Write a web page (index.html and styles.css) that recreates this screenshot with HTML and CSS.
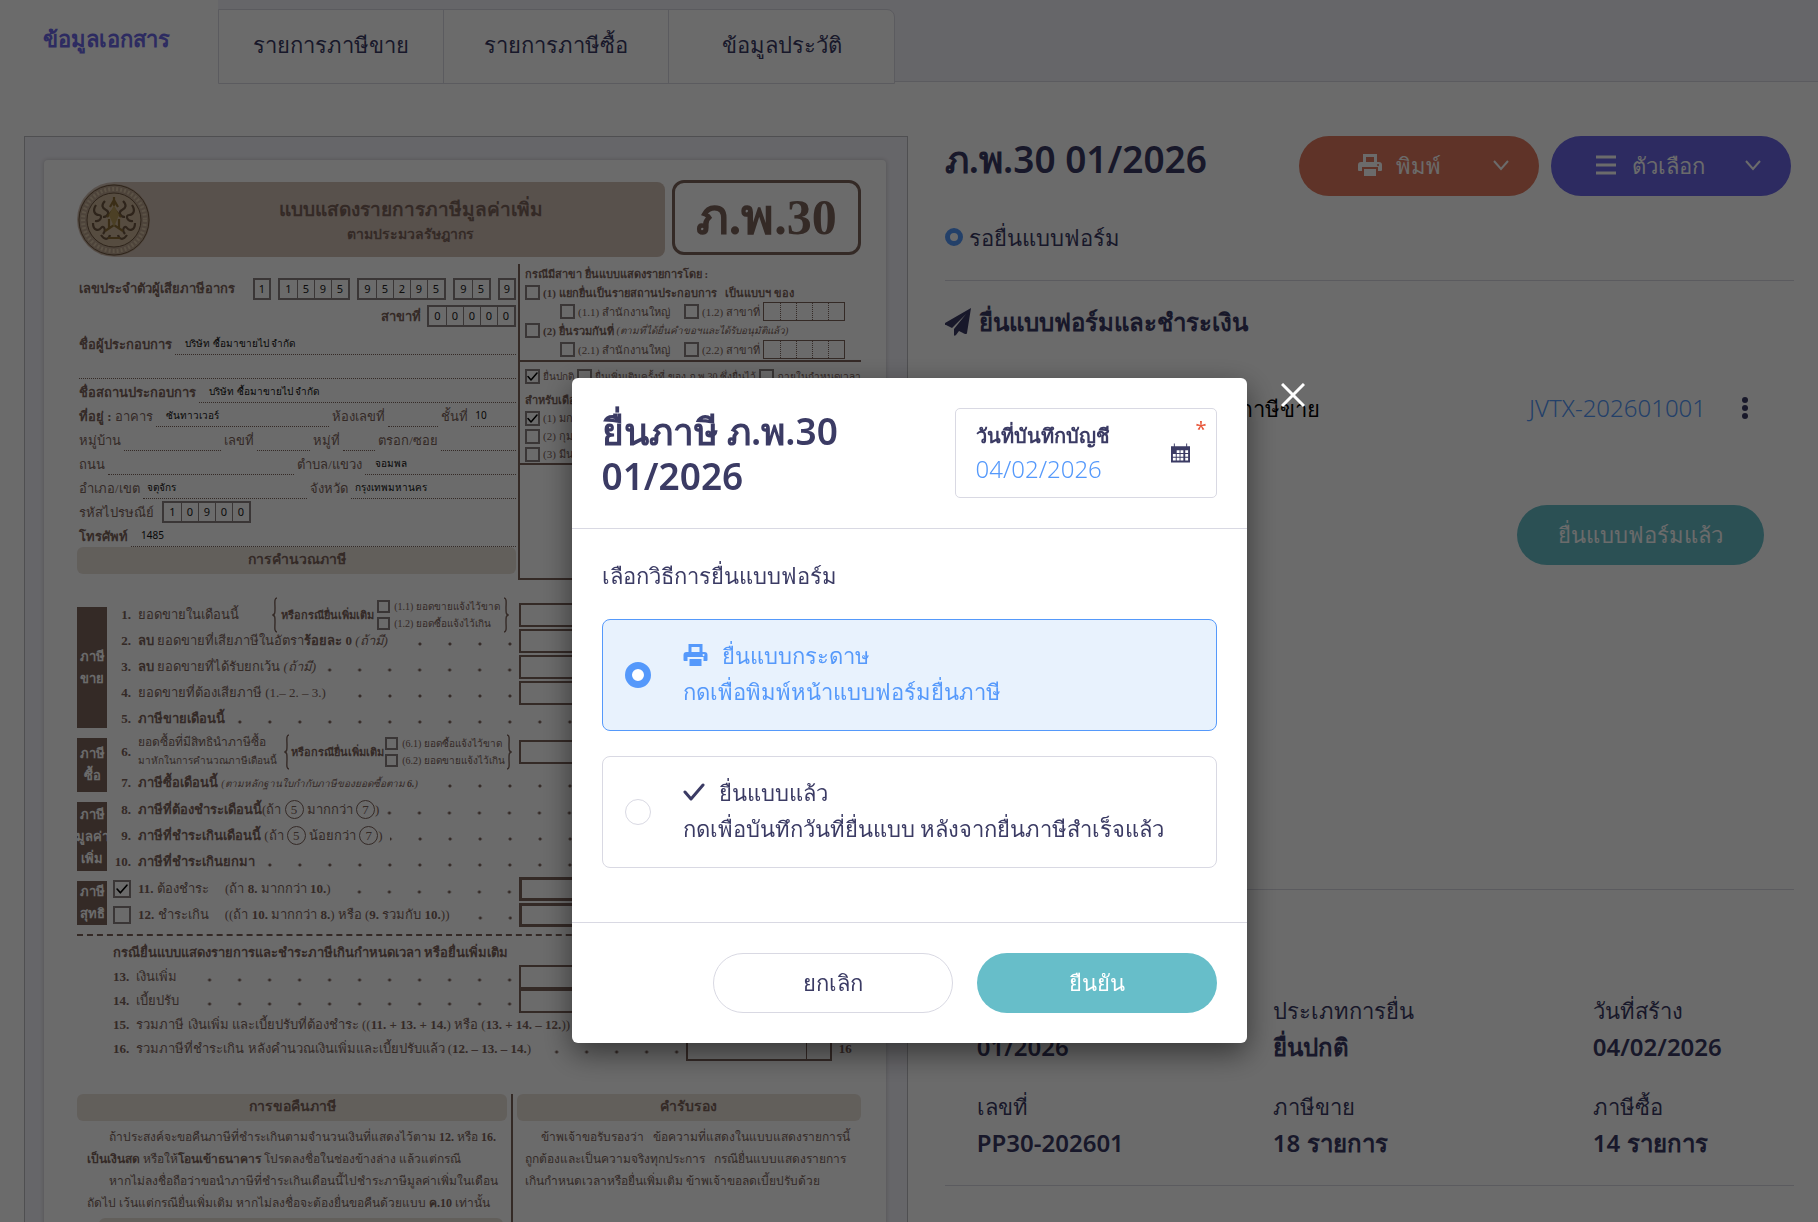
FILE: index.html
```html
<!DOCTYPE html>
<html lang="th">
<head>
    <meta charset="UTF-8">
    <meta name="viewport" content="width=device-width, initial-scale=1.0">
    <title>ภ.พ.30 01/2026</title>
    <link rel="stylesheet" href="styles.css">
</head>
<body>
    <svg class="sprite" aria-hidden="true">
        <symbol id="icon-print" viewBox="0 0 24 24">
            <path fill-rule="evenodd" d="M5 1h14v8h2a3 3 0 0 1 3 3v5a1 1 0 0 1-1 1h-3v-4H4v4H1a1 1 0 0 1-1-1v-5a3 3 0 0 1 3-3h2zM8 4v5h8V4zM20 11a1 1 0 1 0 .1 0z"/>
            <path d="M6 16h12v7H6z"/>
        </symbol>
        <symbol id="icon-down" viewBox="0 0 16 16">
            <path d="M1 4l7 8 7-8" fill="none" stroke="currentColor" stroke-width="2"/>
        </symbol>
        <symbol id="icon-check" viewBox="0 0 22 18">
            <path d="M2 9l6 7L20 2" fill="none" stroke="currentColor" stroke-width="3" stroke-linecap="round" stroke-linejoin="round"/>
        </symbol>
        <symbol id="icon-brace" viewBox="0 0 6 36">
            <path d="M5 1C2 1 3 6 3 11s0 6-2 7c2 1 2 2 2 7s-1 10 2 10" fill="none" stroke="currentColor" stroke-width="1.4"/>
        </symbol>
    </svg>

    <nav class="tabs">
        <a href="#doc" class="tab active">ข้อมูลเอกสาร</a>
        <div class="tab-group">
            <a href="#sales" class="tab">รายการภาษีขาย</a>
            <a href="#purchase" class="tab">รายการภาษีซื้อ</a>
            <a href="#history" class="tab">ข้อมูลประวัติ</a>
        </div>
    </nav>

    <main class="content">
        <section class="viewer">
            <div class="paper">
                <div class="form-head">
                    <div class="form-title">
                        <svg class="seal" viewBox="0 0 74 74">
                            <circle cx="37" cy="37" r="36" fill="#b9a28c"/>
                            <circle cx="37" cy="37" r="35" fill="none" stroke="#6e5640" stroke-width="1"/>
                            <circle cx="37" cy="37" r="31" fill="none" stroke="#d8c3a6" stroke-width="4" stroke-dasharray="2 2"/>
                            <circle cx="37" cy="37" r="27" fill="#cdb698" stroke="#6e5640" stroke-width="1"/>
                            <g fill="none" stroke="#6e5640" stroke-width="2.2">
                                <path d="M19 22c-4 6-1 10 3 10s2 7-4 6M16 40c0 8 6 8 8 5s6 1 2 6M28 18c-4 4-3 7 1 9s2 7-3 7M55 22c4 6 1 10-3 10s-2 7 4 6M58 40c0 8-6 8-8 5s-6 1-2 6M46 18c4 4 3 7-1 9s-2 7 3 7M24 52c4 6 8 4 9 0M50 52c-4 6-8 4-9 0"/>
                                <path d="M37 14v9M33 24l4-7 4 7M30 34l7-8 7 8M32 36v10M42 36v10M28 48l9-6 9 6M31 55h12" stroke="#8a6d35"/>
                            </g>
                            <path d="M37 22l5 10-5 12-5-12z" fill="#b59a58"/>
                        </svg>
                        <div class="form-title-text">
                            <strong>แบบแสดงรายการภาษีมูลค่าเพิ่ม</strong>
                            <b>ตามประมวลรัษฎากร</b>
                        </div>
                    </div>
                    <div class="form-code">ภ.พ.30</div>
                </div>

                <div class="form-top">
                    <div class="payer">
                        <div class="line tax-id">
                            <b>เลขประจำตัวผู้เสียภาษีอากร</b>
                            <span class="digits first"><i>1</i></span>
                            <span class="digits"><i>1</i><i>5</i><i>9</i><i>5</i></span>
                            <span class="digits"><i>9</i><i>5</i><i>2</i><i>9</i><i>5</i></span>
                            <span class="digits"><i>9</i><i>5</i></span>
                            <span class="digits"><i>9</i></span>
                        </div>
                        <div class="line branch"><b>สาขาที่</b><span class="digits"><i>0</i><i>0</i><i>0</i><i>0</i><i>0</i></span></div>
                        <div class="line"><b>ชื่อผู้ประกอบการ</b><span class="fill">บริษัท ซื้อมาขายไป จำกัด</span></div>
                        <div class="line"><span class="fill"></span></div>
                        <div class="line"><b>ชื่อสถานประกอบการ</b><span class="fill">บริษัท ซื้อมาขายไป จำกัด</span></div>
                        <div class="line"><span><b>ที่อยู่ :</b> อาคาร</span><span class="fill w4">ซันทาวเวอร์</span><span>ห้องเลขที่</span><span class="fill w1"></span><span>ชั้นที่</span><span class="fill w1 tight">10</span></div>
                        <div class="line"><span>หมู่บ้าน</span><span class="fill w4"></span><span>เลขที่</span><span class="fill w2"></span><span>หมู่ที่</span><span class="fill w1"></span><span>ตรอก/ซอย</span><span class="fill w3"></span></div>
                        <div class="line"><span>ถนน</span><span class="fill w5"></span><span>ตำบล/แขวง</span><span class="fill w4">จอมพล</span></div>
                        <div class="line"><span>อำเภอ/เขต</span><span class="fill w4 tight">จตุจักร</span><span>จังหวัด</span><span class="fill w4 tight">กรุงเทพมหานคร</span></div>
                        <div class="line zip"><span>รหัสไปรษณีย์</span><span class="digits"><i>1</i><i>0</i><i>9</i><i>0</i><i>0</i></span></div>
                        <div class="line"><b>โทรศัพท์</b><span class="fill">1485</span></div>
                        <div class="bar">การคำนวณภาษี</div>
                    </div>
                    <div class="filing">
                        <div class="line"><b>กรณีมีสาขา ยื่นแบบแสดงรายการโดย :</b></div>
                        <div class="line"><i class="box"></i><b>(1) แยกยื่นเป็นรายสถานประกอบการ &nbsp; เป็นแบบฯ ของ</b></div>
                        <div class="line sub"><i class="box"></i><span class="office">(1.1) สำนักงานใหญ่</span><i class="box"></i><span>(1.2) สาขาที่</span><span class="cells"><i></i><i></i><i></i><i></i><i></i></span></div>
                        <div class="line"><i class="box"></i><b>(2) ยื่นรวมกันที่</b><em>(ตามที่ได้ยื่นคำขอฯและได้รับอนุมัติแล้ว)</em></div>
                        <div class="line sub"><i class="box"></i><span class="office">(2.1) สำนักงานใหญ่</span><i class="box"></i><span>(2.2) สาขาที่</span><span class="cells"><i></i><i></i><i></i><i></i><i></i></span></div>
                        <div class="line ruled"><i class="box checked"><svg><use href="#icon-check"/></svg></i><span>ยื่นปกติ</span><i class="box"></i><span class="grow">ยื่นเพิ่มเติมครั้งที่</span><span>ของ ภ.พ.30 ซึ่งยื่นไว้</span><i class="box"></i><span>ภายในกำหนดเวลา</span></div>
                        <div class="line month"><b>สำหรับเดือน</b></div>
                        <div class="line month"><i class="box checked"><svg><use href="#icon-check"/></svg></i><span>(1) มกราคม</span></div>
                        <div class="line month"><i class="box"></i><span>(2) กุมภาพันธ์</span></div>
                        <div class="line month"><i class="box"></i><span>(3) มีนาคม</span></div>
                        <div class="stamp"></div>
                    </div>
                </div>

                <div class="calc">
                    <div class="group">
                        <div class="side">ภาษี<br>ขาย</div>
                        <ol class="items">
                            <li><span class="no">1.</span><span>ยอดขายในเดือนนี้</span>
                                <span class="extra">
                                    <svg class="brace"><use href="#icon-brace"/></svg><b>หรือกรณียื่นเพิ่มเติม</b>
                                    <span class="pair"><span><i class="box"></i>(1.1) ยอดขายแจ้งไว้ขาด</span><span><i class="box"></i>(1.2) ยอดซื้อแจ้งไว้เกิน</span></span>
                                    <svg class="brace flip"><use href="#icon-brace"/></svg>
                                </span>
                                <span class="amount"></span></li>
                            <li><span class="no">2.</span><span><b>ลบ</b> ยอดขายที่เสียภาษีในอัตรา<b>ร้อยละ 0</b> <em>(ถ้ามี)</em></span><span class="leader"></span><span class="amount"></span></li>
                            <li><span class="no">3.</span><span><b>ลบ</b> ยอดขายที่ได้รับยกเว้น <em>(ถ้ามี)</em></span><span class="leader"></span><span class="amount"></span></li>
                            <li><span class="no">4.</span><span>ยอดขายที่ต้องเสียภาษี (1.– 2. – 3.)</span><span class="leader"></span><span class="amount"></span></li>
                            <li><span class="no">5.</span><b>ภาษีขายเดือนนี้</b><span class="leader"></span><span class="blank"></span></li>
                        </ol>
                    </div>
                    <div class="group">
                        <div class="side">ภาษี<br>ซื้อ</div>
                        <ol class="items">
                            <li class="tall"><span class="no">6.</span><span>ยอดซื้อที่มีสิทธินำภาษีซื้อ<br><small>มาหักในการคำนวณภาษีเดือนนี้</small></span>
                                <span class="extra">
                                    <svg class="brace"><use href="#icon-brace"/></svg><b>หรือกรณียื่นเพิ่มเติม</b>
                                    <span class="pair"><span><i class="box"></i>(6.1) ยอดซื้อแจ้งไว้ขาด</span><span><i class="box"></i>(6.2) ยอดขายแจ้งไว้เกิน</span></span>
                                    <svg class="brace flip"><use href="#icon-brace"/></svg>
                                </span>
                                <span class="amount"></span></li>
                            <li><span class="no">7.</span><span><b>ภาษีซื้อเดือนนี้</b> <em class="fine">(ตามหลักฐานใบกำกับภาษีของยอดซื้อตาม <b>6.</b>)</em></span><span class="leader"></span><span class="blank"></span></li>
                        </ol>
                    </div>
                    <div class="group">
                        <div class="side">ภาษี<br>มูลค่า<br>เพิ่ม</div>
                        <ol class="items">
                            <li><span class="no">8.</span><span><b>ภาษีที่ต้องชำระเดือนนี้</b>(ถ้า <i class="ring">5</i> มากกว่า <i class="ring">7</i>)</span><span class="leader"></span><span class="blank"></span></li>
                            <li><span class="no">9.</span><span><b>ภาษีที่ชำระเกินเดือนนี้</b> (ถ้า <i class="ring">5</i> น้อยกว่า <i class="ring">7</i>)</span><span class="leader"></span><span class="blank"></span></li>
                            <li><span class="no">10.</span><b>ภาษีที่ชำระเกินยกมา</b><span class="leader"></span><span class="blank"></span></li>
                        </ol>
                    </div>
                    <div class="group">
                        <div class="side">ภาษี<br>สุทธิ</div>
                        <ol class="items">
                            <li><span class="no"><i class="box big checked"><svg><use href="#icon-check"/></svg></i></span><span><b>11.</b> ต้องชำระ &nbsp; &nbsp; (ถ้า <b>8.</b> มากกว่า <b>10.</b>)</span><span class="leader"></span><span class="amount heavy"></span></li>
                            <li><span class="no"><i class="box big"></i></span><span><b>12.</b> ชำระเกิน &nbsp; &nbsp; ((ถ้า <b>10.</b> มากกว่า <b>8.</b>) หรือ (<b>9.</b> รวมกับ <b>10.</b>))</span><span class="leader"></span><span class="amount heavy"></span></li>
                        </ol>
                    </div>
                    <div class="late">
                        <div class="late-row"><b>กรณียื่นแบบแสดงรายการและชำระภาษีเกินกำหนดเวลา หรือยื่นเพิ่มเติม</b></div>
                        <div class="late-row"><b>13.</b><span>เงินเพิ่ม</span><span class="leader"></span><span class="amount"></span></div>
                        <div class="late-row"><b>14.</b><span>เบี้ยปรับ</span><span class="leader"></span><span class="amount"></span></div>
                        <div class="late-row"><b>15.</b><span>รวมภาษี เงินเพิ่ม และเบี้ยปรับที่ต้องชำระ ((<b>11. + 13. + 14.</b>) หรือ (<b>13. + 14. – 12.</b>))</span></div>
                        <div class="late-row"><b>16.</b><span>รวมภาษีที่ชำระเกิน หลังคำนวณเงินเพิ่มและเบี้ยปรับแล้ว (<b>12. – 13. – 14.</b>)</span><span class="leader"></span><span class="total"></span><b class="total-no">16</b></div>
                    </div>
                </div>

                <div class="form-foot">
                    <div class="refund">
                        <div class="bar">การขอคืนภาษี</div>
                        <p>ถ้าประสงค์จะขอคืนภาษีที่ชำระเกินตามจำนวนเงินที่แสดงไว้ตาม <b>12.</b> หรือ <b>16.</b><br><b>เป็นเงินสด</b> หรือให้<b>โอนเข้าธนาคาร</b> โปรดลงชื่อในช่องข้างล่าง แล้วแต่กรณี</p>
                        <p>หากไม่ลงชื่อถือว่าขอนำภาษีที่ชำระเกินเดือนนี้ไปชำระภาษีมูลค่าเพิ่มในเดือน<br>ถัดไป เว้นแต่กรณียื่นเพิ่มเติม หากไม่ลงชื่อจะต้องยื่นขอคืนด้วยแบบ <b>ค.10</b> เท่านั้น</p>
                        <div class="bar next"></div>
                    </div>
                    <div class="certify">
                        <div class="bar">คำรับรอง</div>
                        <p>ข้าพเจ้าขอรับรองว่า &nbsp; ข้อความที่แสดงในแบบแสดงรายการนี้<br>ถูกต้องและเป็นความจริงทุกประการ &nbsp; กรณียื่นแบบแสดงรายการ<br>เกินกำหนดเวลาหรือยื่นเพิ่มเติม ข้าพเจ้าขอลดเบี้ยปรับด้วย</p>
                    </div>
                </div>
            </div>
        </section>

        <section class="details">
            <div class="details-head">
                <h1>ภ.พ.30 01/2026</h1>
                <div class="actions">
                    <button type="button" class="btn btn-print"><svg class="lead"><use href="#icon-print"/></svg><span>พิมพ์</span><svg class="caret"><use href="#icon-down"/></svg></button>
                    <button type="button" class="btn btn-menu"><svg class="lead" viewBox="0 0 24 24"><path d="M2 4h20M2 12h20M2 20h20" stroke="currentColor" stroke-width="3"/></svg><span>ตัวเลือก</span><svg class="caret"><use href="#icon-down"/></svg></button>
                </div>
            </div>
            <div class="status"><span class="status-ring"></span>รอยื่นแบบฟอร์ม</div>

            <div class="filing-step">
                <h2>
                    <svg viewBox="0 0 26 28"><path d="M26 0L0 15c-1 1 0 2 1 2l6 3L21 6 9 21v6c0 1 1 1 2 0l3-4 6 3c1 0 2 0 2-1z"/></svg>
                    ยื่นแบบฟอร์มและชำระเงิน
                </h2>
                <div class="journal">
                    <span class="journal-name">ปิดบัญชีภาษีขาย</span>
                    <a href="#JVTX-202601001">JVTX-202601001</a>
                    <button type="button" class="more" aria-label="เพิ่มเติม"><svg viewBox="0 0 6 22"><circle cx="3" cy="3" r="3"/><circle cx="3" cy="11" r="3"/><circle cx="3" cy="19" r="3"/></svg></button>
                </div>
                <button type="button" class="btn btn-filed">ยื่นแบบฟอร์มแล้ว</button>
            </div>

            <dl class="info">
                <div><dt>งวดภาษี</dt><dd>01/2026</dd></div>
                <div><dt>ประเภทการยื่น</dt><dd>ยื่นปกติ</dd></div>
                <div><dt>วันที่สร้าง</dt><dd>04/02/2026</dd></div>
                <div><dt>เลขที่</dt><dd>PP30-202601</dd></div>
                <div><dt>ภาษีขาย</dt><dd>18 รายการ</dd></div>
                <div><dt>ภาษีซื้อ</dt><dd>14 รายการ</dd></div>
            </dl>
        </section>
    </main>

    <div class="overlay">
        <form class="modal" role="dialog" aria-labelledby="modalTitle">
            <button type="button" class="close" aria-label="ปิด"><svg viewBox="0 0 24 24"><path d="M1 1l22 22M23 1L1 23" stroke="currentColor" stroke-width="3"/></svg></button>
            <div class="modal-head">
                <h2 id="modalTitle">ยื่นภาษี ภ.พ.30<br>01/2026</h2>
                <div class="date-field">
                    <div class="date-text">
                        <label for="postDate">วันที่บันทึกบัญชี</label>
                        <input type="text" id="postDate" value="04/02/2026">
                    </div>
                    <svg class="calendar" viewBox="0 0 20 20"><path fill-rule="evenodd" d="M0 3h3V0h1v3h12V0h1v3h3v17H0zM6 7v3h3V7zM10 7v3h3V7zM15 7v3h3V7zM2 11v3h3v-3zM6 11v3h3v-3zM10 11v3h3v-3zM15 11v3h3v-3zM2 15v3h3v-3zM6 15v3h3v-3zM10 15v3h3v-3zM15 15v3h3v-3z"/></svg>
                    <span class="required">*</span>
                </div>
            </div>
            <div class="modal-body">
                <p>เลือกวิธีการยื่นแบบฟอร์ม</p>
                <label class="option">
                    <input type="radio" name="method" checked>
                    <span class="option-text">
                        <span class="option-title"><svg><use href="#icon-print"/></svg>ยื่นแบบกระดาษ</span>
                        <span>กดเพื่อพิมพ์หน้าแบบฟอร์มยื่นภาษี</span>
                    </span>
                </label>
                <label class="option">
                    <input type="radio" name="method">
                    <span class="option-text">
                        <span class="option-title"><svg class="tick"><use href="#icon-check"/></svg>ยื่นแบบแล้ว</span>
                        <span>กดเพื่อบันทึกวันที่ยื่นแบบ หลังจากยื่นภาษีสำเร็จแล้ว</span>
                    </span>
                </label>
            </div>
            <div class="modal-foot">
                <button type="button" class="btn btn-cancel">ยกเลิก</button>
                <button type="submit" class="btn btn-confirm">ยืนยัน</button>
            </div>
        </form>
    </div>
</body>
</html>
```
FILE: styles.css
```css
:root {
    --text: #3b3b64;
    --line: #d9d9e3;
    --blue: #5599fb;
    --purple: #6b67e6;
    --teal: #67bec9;
    --orange: #e27a60;
    --ink: #7d645c;
    --bar: #e9e2da;
    --panel: #f3f2f9;
}
* {
    box-sizing: border-box;
}
body {
    margin: 0;
    height: 100vh;
    overflow: hidden;
    display: flex;
    flex-direction: column;
    background: #fff;
    color: var(--text);
    font-family: "Noto Sans", sans-serif;
    font-size: 22px;
    font-weight: 300;
    line-height: 36px;
}
a {
    color: var(--blue);
    text-decoration: none;
}
svg {
    fill: currentColor;
    flex: none;
}
.sprite {
    position: absolute;
    width: 0;
    height: 0;
}

/* tabs */
.tabs {
    display: flex;
    height: 82px;
    flex: none;
    background: var(--panel);
    border-bottom: 1px solid var(--line);
}
.tab {
    color: var(--text);
    display: flex;
    align-items: center;
    justify-content: center;
}
.tab.active {
    width: 218px;
    height: 84px;
    padding-right: 6px;
    padding-bottom: 8px;
    background: #fff;
    color: var(--purple);
    font-weight: 600;
}
.tab-group {
    display: flex;
    height: 75px;
    margin-top: 9px;
    border: 1px solid var(--line);
    border-radius: 0 8px 0 0;
    background: #fff;
}
.tab-group .tab {
    width: 225px;
    padding-bottom: 5px;
    border-right: 1px solid var(--line);
}
.tab-group .tab:last-child {
    border-right: none;
}

.content {
    flex: 1;
    min-height: 0;
    display: grid;
    grid-template-columns: 51fr 49fr;
    gap: 37px;
    padding: 54px 24px 0;
}
.viewer {
    overflow: hidden;
    padding: 23px 21px 0 19px;
    background: var(--panel);
    border: 1px solid #bdbdc2;
    border-bottom: none;
}

/* paper form */
.paper {
    padding: 20px 25px 0 33px;
    background: #fff;
    border-radius: 4px;
    box-shadow: 0 0 4px rgba(0, 0, 0, 0.2);
    color: var(--ink);
    font-family: "Liberation Serif", serif;
    font-size: 13px;
    font-weight: 400;
    line-height: 20px;
    white-space: nowrap;
}
.paper i {
    font-style: normal;
}
.form-head {
    display: flex;
    gap: 7px;
}
.form-title {
    flex: 1;
    display: flex;
    align-items: center;
    height: 75px;
    margin-top: 2px;
    background: #d2c0b5;
    border-radius: 38px 8px 8px 38px;
}
.seal {
    width: 74px;
    height: 74px;
}
.form-title-text {
    flex: 1;
    display: flex;
    flex-direction: column;
    align-items: center;
    padding: 4px 0 0 6px;
    line-height: 25px;
}
.form-title-text strong {
    font-size: 19px;
}
.form-title-text b {
    font-size: 14px;
}
.form-code {
    width: 189px;
    height: 75px;
    border: 3px solid var(--ink);
    border-radius: 12px;
    font-size: 50px;
    font-weight: bold;
    line-height: 68px;
    text-align: center;
}
.form-top {
    display: grid;
    grid-template-columns: 441px minmax(0, 1fr);
    margin-top: 7px;
}
.payer {
    display: flex;
    flex-direction: column;
    padding: 13px 2px 6px 0;
}
.line {
    display: flex;
    align-items: flex-end;
    gap: 3px;
    height: 24px;
    padding-left: 2px;
}
.tax-id {
    align-items: center;
    gap: 7px;
}
.first {
    margin-left: auto;
}
.branch {
    justify-content: flex-end;
    height: 26px;
    gap: 6px;
    margin-bottom: 4px;
}
.digits {
    display: flex;
    border: 2px solid #8a8280;
    color: #222;
    font-family: "Noto Sans", sans-serif;
    font-size: 11px;
    line-height: 18px;
}
.zip {
    gap: 8px;
}
.digits i {
    width: 17px;
    text-align: center;
}
.digits i:only-child {
    width: 14px;
}
.digits i + i {
    border-left: 1px solid #8a8280;
}
.fill {
    flex: 1;
    height: 19px;
    padding-left: 10px;
    border-bottom: 1px dotted var(--ink);
    color: #111;
    font-family: "Noto Sans", sans-serif;
    font-size: 10px;
    line-height: 14px;
}
.fill.tight {
    padding-left: 4px;
}
.w2 {
    flex-grow: 2;
}
.w3 {
    flex-grow: 3;
}
.w4 {
    flex-grow: 4;
}
.w5 {
    flex-grow: 5;
}
.bar {
    height: 27px;
    border-radius: 6px;
    background: var(--bar);
    font-size: 14px;
    font-weight: bold;
    line-height: 26px;
    text-align: center;
}
.filing {
    display: flex;
    flex-direction: column;
    border-left: 2px solid var(--ink);
    font-size: 11px;
}
.filing .line {
    height: 19px;
    padding-left: 5px;
    align-items: center;
}
.filing .line.sub {
    padding-left: 40px;
}
.filing .line.ruled {
    height: 31px;
    margin-top: 1px;
    border-top: 2px solid var(--ink);
    font-size: 10px;
}
.filing .line.month {
    height: 18px;
}
.filing .box {
    width: 15px;
    height: 15px;
}
.filing em {
    font-size: 10px;
}
.office {
    width: 104px;
}
.grow {
    flex: 1;
}
.cells {
    display: flex;
    margin-left: auto;
    margin-right: 16px;
    border: 1px solid var(--ink);
}
.cells i {
    width: 16px;
    height: 17px;
}
.cells i + i {
    border-left: 1px dotted var(--ink);
}
.stamp {
    flex: 1;
    border: 2px solid var(--ink);
    border-left: none;
}
.box {
    display: inline-block;
    flex: none;
    width: 13px;
    height: 13px;
    border: 2px solid #8a8280;
}
.box svg {
    display: block;
    width: 11px;
    height: 11px;
    color: #000;
}
.box.big {
    width: 18px;
    height: 18px;
}
.box.big svg {
    width: 12px;
    height: 12px;
    margin: 1px;
}
.calc {
    margin-top: 22px;
}
.group {
    display: flex;
    gap: 6px;
    margin-bottom: 1px;
}
.side {
    flex: none;
    display: flex;
    align-items: center;
    justify-content: center;
    width: 30px;
    margin: 5px 0 4px;
    background: var(--ink);
    color: #fff;
    font-weight: bold;
    line-height: 22px;
    text-align: center;
}
.items {
    flex: 1;
    min-width: 0;
    margin: 0;
    padding: 0;
    list-style: none;
}
.items li {
    display: flex;
    align-items: center;
    gap: 7px;
    height: 26px;
}
.items li.tall {
    height: 37px;
    font-size: 12px;
    line-height: 18px;
}
.no {
    flex: none;
    width: 18px;
    display: flex;
    justify-content: flex-end;
    font-size: 13px;
    font-weight: bold;
}
.extra {
    display: flex;
    align-items: center;
    gap: 3px;
    margin-left: auto;
    margin-right: 3px;
    font-size: 11px;
}
.tall .extra {
    gap: 1px;
    margin-right: 0;
}
.brace {
    width: 6px;
    height: 36px;
}
.flip {
    transform: scaleX(-1);
}
.pair {
    display: flex;
    flex-direction: column;
    font-size: 10px;
    line-height: 17px;
}
.pair span {
    display: flex;
    align-items: center;
    gap: 4px;
}
.leader {
    flex: 1;
    height: 14px;
    background: radial-gradient(circle at 28px 10px, var(--ink) 1px, transparent 2px) right top / 30px 14px repeat-x;
}
.amount {
    flex: none;
    width: 342px;
    height: 24px;
    border: 2px solid var(--ink);
}
.amount.heavy {
    border-width: 3px;
}
.blank {
    width: 282px;
}
.ring {
    display: inline-block;
    width: 19px;
    height: 19px;
    border: 1px solid var(--ink);
    border-radius: 50%;
    line-height: 17px;
    text-align: center;
}
small,
.fine {
    font-size: 10px;
}
.late {
    margin-top: 5px;
    padding: 5px 0 0 36px;
    border-top: 2px dashed var(--ink);
}
.late-row {
    display: flex;
    align-items: center;
    gap: 7px;
    height: 24px;
}
.total {
    width: 146px;
    height: 24px;
    border: 2px solid var(--ink);
    background: linear-gradient(var(--ink), var(--ink)) 118px 0 / 1px 100% no-repeat;
}
.total-no {
    width: 22px;
}
.form-foot {
    display: grid;
    grid-template-columns: 434px minmax(0, 1fr);
    margin-top: 33px;
    font-size: 12px;
    line-height: 22px;
}
.form-foot p {
    margin: 0;
    padding-left: 10px;
    text-indent: 22px;
}
.form-foot .bar {
    text-indent: 0;
    margin-bottom: 5px;
}
.refund {
    padding-right: 4px;
}
.form-foot .next {
    margin: 4px 4px 0 22px;
}
.certify {
    padding-left: 4px;
    border-left: 2px solid var(--ink);
}
.form-foot .certify p {
    padding-left: 8px;
    text-indent: 16px;
}

/* details column */
.details-head {
    display: flex;
    justify-content: space-between;
    padding-right: 3px;
}
h1,
h2 {
    margin: 0;
    font-weight: 600;
}
h1 {
    font-size: 37px;
    line-height: 46px;
}
.actions {
    display: flex;
    gap: 12px;
}
.btn {
    display: flex;
    align-items: center;
    justify-content: center;
    width: 240px;
    height: 60px;
    padding: 0 0 2px;
    border: none;
    border-radius: 30px;
    color: #fff;
    font: inherit;
    cursor: pointer;
}
.btn .lead {
    width: 24px;
    height: 24px;
    margin-right: 14px;
}
.btn .caret {
    width: 16px;
    height: 16px;
    margin-left: 40px;
}
.actions .btn {
    justify-content: flex-end;
    padding-right: 30px;
}
.actions .btn span {
    flex: none;
}
.btn-print {
    background: var(--orange);
}
.btn-print .caret {
    margin-left: 52px;
}
.btn-menu {
    background: var(--purple);
}
.status {
    display: flex;
    align-items: center;
    gap: 6px;
    height: 85px;
    padding-bottom: 2px;
    border-bottom: 1px solid var(--line);
}
.status-ring {
    width: 18px;
    height: 18px;
    border: 5px solid var(--blue);
    border-radius: 50%;
}
.filing-step {
    height: 609px;
    padding-top: 21px;
    border-bottom: 1px solid var(--line);
}
.filing-step h2 {
    display: flex;
    align-items: center;
    gap: 8px;
    font-size: 24px;
    line-height: 40px;
}
.filing-step h2 svg {
    width: 26px;
    height: 28px;
}
.journal {
    display: flex;
    align-items: center;
    height: 60px;
    margin-top: 36px;
    padding: 0 46px 0 60px;
}
.journal-name {
    width: 315px;
    color: #000;
    text-align: right;
}
.journal a {
    margin-left: auto;
    font-size: 24px;
}
.more {
    display: flex;
    margin-left: 36px;
    padding: 0;
    border: none;
    background: none;
    color: var(--text);
}
.more svg {
    width: 6px;
    height: 22px;
}
.btn-filed {
    width: 247px;
    margin: 67px 30px 0 auto;
    background: var(--teal);
}
.info {
    display: grid;
    grid-template-columns: 296px 320px 1fr;
    row-gap: 23px;
    margin: 0;
    padding: 102px 0 24px 32px;
    border-bottom: 1px solid var(--line);
}
.info dd {
    margin: 1px 0 0;
    font-size: 24px;
    font-weight: 600;
}

/* modal */
.overlay {
    position: fixed;
    inset: 0;
    display: flex;
    justify-content: center;
    align-items: flex-start;
    padding-top: 378px;
    background: rgba(0, 0, 0, 0.58);
}
.modal {
    position: relative;
    width: 675px;
    border-radius: 6px;
    background: #fff;
    box-shadow: 0 10px 30px rgba(0, 0, 0, 0.5);
}
.close {
    position: absolute;
    top: 5px;
    right: -58px;
    width: 24px;
    height: 24px;
    padding: 0;
    border: none;
    background: none;
    color: #fff;
}
.close svg {
    display: block;
}
.modal-head {
    display: flex;
    justify-content: space-between;
    padding: 30px;
    border-bottom: 1px solid var(--line);
}
.modal-head h2 {
    font-size: 37px;
    line-height: 45px;
}
.date-field {
    position: relative;
    display: flex;
    align-items: center;
    justify-content: space-between;
    width: 262px;
    height: 90px;
    padding: 0 26px 0 20px;
    border: 1px solid var(--line);
    border-radius: 5px;
}
.date-text {
    width: 150px;
}
.date-field label {
    display: block;
    font-size: 20px;
    font-weight: 600;
    line-height: 32px;
}
.date-field input {
    display: block;
    width: 100%;
    height: 34px;
    padding: 0;
    border: none;
    outline: none;
    background: none;
    color: var(--blue);
    font: inherit;
    font-size: 24px;
}
.calendar {
    width: 19px;
    height: 20px;
}
.required {
    position: absolute;
    top: 8px;
    right: 9px;
    color: #e8583c;
    font-size: 20px;
    font-weight: 400;
    line-height: 24px;
}
.modal-body {
    padding: 28px 30px 54px;
}
.modal-body p {
    margin: 0 0 26px;
}
.option {
    display: flex;
    align-items: center;
    gap: 32px;
    height: 112px;
    padding-left: 22px;
    border: 1px solid var(--line);
    border-radius: 8px;
}
.option + .option {
    margin-top: 25px;
}
.option:has(input:checked) {
    border-color: var(--blue);
    background: #e8f2fd;
    color: var(--blue);
}
.option input {
    appearance: none;
    width: 26px;
    height: 26px;
    margin: 0;
    border: 1px solid var(--line);
    border-radius: 50%;
    background: #fff;
}
.option input:checked {
    border: 7px solid var(--blue);
}
.option-text {
    display: flex;
    flex-direction: column;
    padding-bottom: 4px;
}
.option-title {
    display: flex;
    align-items: center;
    gap: 14px;
}
.option-title svg {
    width: 25px;
    height: 24px;
}
.option-title .tick {
    width: 22px;
    height: 18px;
}
.modal-foot {
    display: flex;
    justify-content: flex-end;
    gap: 24px;
    padding: 30px;
    border-top: 1px solid var(--line);
}
.btn-cancel {
    border: 1px solid var(--line);
    background: #fff;
    color: var(--text);
}
.btn-confirm {
    background: var(--teal);
}
```
